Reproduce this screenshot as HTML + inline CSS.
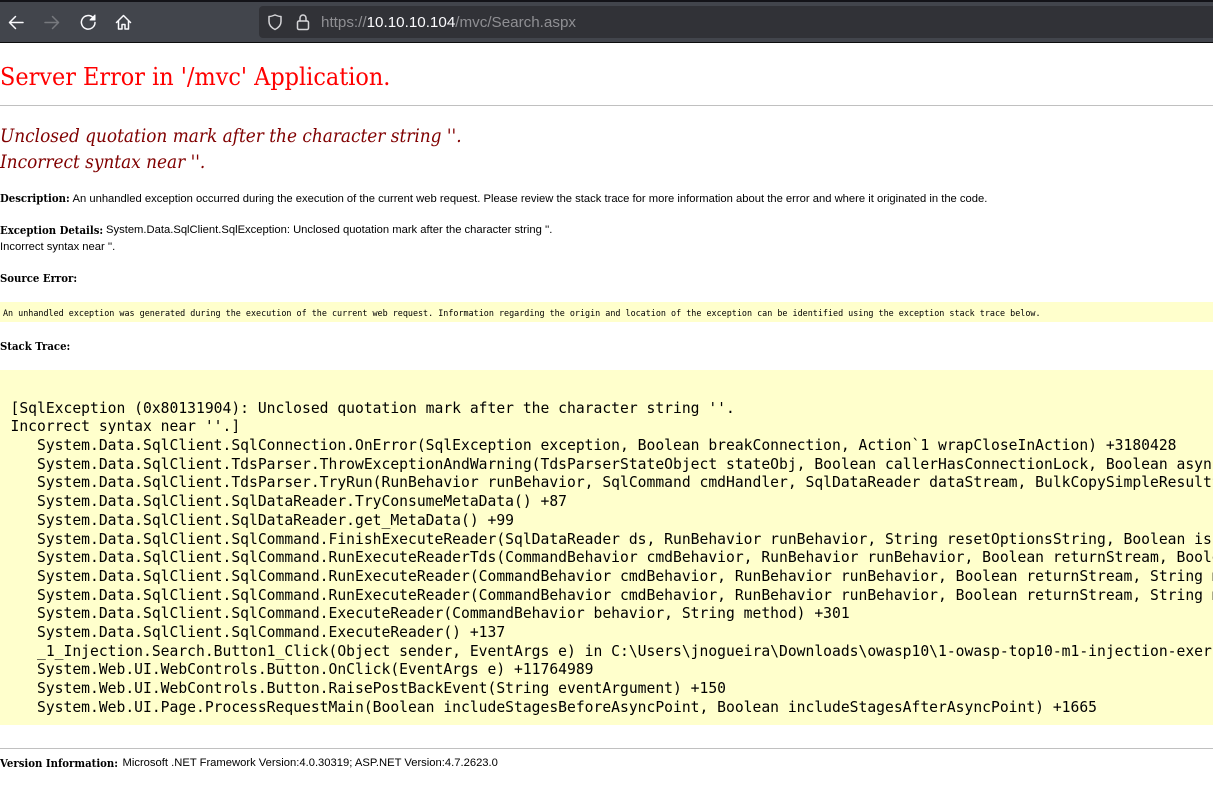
<!DOCTYPE html>
<html>
<head>
<meta charset="utf-8">
<style>
html,body{margin:0;padding:0;background:#fff;width:1213px;height:808px;overflow:hidden}
.a{position:absolute;white-space:pre;left:0}
#bar{position:absolute;left:0;top:0;width:1213px;height:43px;background:#42454c;border-top:2px solid #131318;border-bottom:1px solid #0c0c0d;box-sizing:border-box}
#url{position:absolute;left:259px;top:4px;width:954px;height:32px;background:#313237;border-radius:4px 0 0 4px}
#urltxt{position:absolute;left:321px;top:14px;font:15.2px "Liberation Sans",sans-serif;color:#8f8f93;white-space:pre}
#urltxt b{font-weight:normal;color:#fbfbfe}
h1{margin:0;font:normal 24px "DejaVu Serif",serif;color:#f00;transform:scaleX(.933);transform-origin:0 0}
.h2{font:italic 19px "DejaVu Serif",serif;color:#800000;transform:scaleX(.891);transform-origin:0 0}
.t{font:11.22px "Liberation Sans",sans-serif;color:#000}
.b{font:bold 11px "DejaVu Serif",serif;color:#000;transform:scaleX(.92);transform-origin:0 0}
.hr{position:absolute;left:0;width:1213px;height:1px;background:#c0c0c0}
.y{position:absolute;left:0;width:1213px;background:#ffffcc}
.m{font:14.685px "DejaVu Sans Mono",monospace;color:#000;left:10.5px;line-height:18px}
.sm{font:8.42px "DejaVu Sans Mono",monospace;left:3px;color:#000}
</style>
</head>
<body>
<div id="bar">
<div id="url"></div>
</div>
<svg style="position:absolute;left:0;top:0" width="320" height="43" fill="none" stroke-linecap="round" stroke-linejoin="round" stroke-width="1.5">
<path d="M23 22.500H9.500M15.500 16.500l-6 6 6 6" stroke="#fbfbfe"/>
<path d="M45 22.500h13.500M52.500 16.500l6 6-6 6" stroke="#77797e"/>
<path d="M93 17.500a6.800 6.800 0 1 0 2 5" stroke="#fbfbfe"/>
<path d="M95 15v5h-5z" fill="#fbfbfe" stroke="#fbfbfe" stroke-width="1"/>
<path d="M116.500 22.500l7-7 7 7M118.500 21v8h3.500v-4.500h3V29h3.500v-8" stroke="#fbfbfe"/>
<path d="M269 16.500c2 0 4-.7 5.800-1.500h.4c1.800.8 3.800 1.500 5.800 1.500v5c0 4-3 6.500-6 8-3-1.500-6-4-6-8z" stroke="#d5d5d8"/>
<rect x="297.500" y="21" width="11" height="8.500" rx="1.500" stroke="#d5d5d8"/>
<path d="M300 21v-3a3 3 0 0 1 6 0v3" stroke="#d5d5d8"/>
</svg>
<div id="urltxt">https://<b>10.10.10.104</b>/mvc/Search.aspx</div>

<h1 class="a" style="top:63px">Server Error in '/mvc' Application.</h1>
<div class="hr" style="top:105px"></div>
<div class="a h2" style="top:125px">Unclosed quotation mark after the character string ''.</div>
<div class="a h2" style="top:151px">Incorrect syntax near ''.</div>
<div class="a b" style="top:192px">Description:</div>
<div class="a t" style="top:193px;left:72.500px">An unhandled exception occurred during the execution of the current web request. Please review the stack trace for more information about the error and where it originated in the code.</div>
<div class="a b" style="top:224px">Exception Details:</div>
<div class="a t" style="top:224px;left:106px">System.Data.SqlClient.SqlException: Unclosed quotation mark after the character string ''.</div>
<div class="a t" style="top:241px">Incorrect syntax near ''.</div>
<div class="a b" style="top:272px">Source Error:</div>
<div class="y" style="top:302px;height:20px"></div>
<div class="a sm" style="top:308px">An unhandled exception was generated during the execution of the current web request. Information regarding the origin and location of the exception can be identified using the exception stack trace below.</div>
<div class="a b" style="top:340px">Stack Trace:</div>
<div class="y" style="top:370px;height:355px"></div>
<div style="position:absolute;left:0;top:370px;width:1213px;height:355px;overflow:hidden">
<div class="a m" style="top:30px">[SqlException (0x80131904): Unclosed quotation mark after the character string ''.</div>
<div class="a m" style="top:48px">Incorrect syntax near ''.]</div>
<div class="a m" style="top:67px">   System.Data.SqlClient.SqlConnection.OnError(SqlException exception, Boolean breakConnection, Action`1 wrapCloseInAction) +3180428</div>
<div class="a m" style="top:86px">   System.Data.SqlClient.TdsParser.ThrowExceptionAndWarning(TdsParserStateObject stateObj, Boolean callerHasConnectionLock, Boolean asyncClose) +208</div>
<div class="a m" style="top:104px">   System.Data.SqlClient.TdsParser.TryRun(RunBehavior runBehavior, SqlCommand cmdHandler, SqlDataReader dataStream, BulkCopySimpleResultSet bulkCopyHandler) +2700</div>
<div class="a m" style="top:123px">   System.Data.SqlClient.SqlDataReader.TryConsumeMetaData() +87</div>
<div class="a m" style="top:142px">   System.Data.SqlClient.SqlDataReader.get_MetaData() +99</div>
<div class="a m" style="top:161px">   System.Data.SqlClient.SqlCommand.FinishExecuteReader(SqlDataReader ds, RunBehavior runBehavior, String resetOptionsString, Boolean isInternal) +292</div>
<div class="a m" style="top:179px">   System.Data.SqlClient.SqlCommand.RunExecuteReaderTds(CommandBehavior cmdBehavior, RunBehavior runBehavior, Boolean returnStream, Boolean async) +3200</div>
<div class="a m" style="top:198px">   System.Data.SqlClient.SqlCommand.RunExecuteReader(CommandBehavior cmdBehavior, RunBehavior runBehavior, Boolean returnStream, String method) +100</div>
<div class="a m" style="top:217px">   System.Data.SqlClient.SqlCommand.RunExecuteReader(CommandBehavior cmdBehavior, RunBehavior runBehavior, Boolean returnStream, String method) +100</div>
<div class="a m" style="top:235px">   System.Data.SqlClient.SqlCommand.ExecuteReader(CommandBehavior behavior, String method) +301</div>
<div class="a m" style="top:254px">   System.Data.SqlClient.SqlCommand.ExecuteReader() +137</div>
<div class="a m" style="top:273px">   _1_Injection.Search.Button1_Click(Object sender, EventArgs e) in C:\Users\jnogueira\Downloads\owasp10\1-owasp-top10-m1-injection-exercise-files\before\1.Injection</div>
<div class="a m" style="top:291px">   System.Web.UI.WebControls.Button.OnClick(EventArgs e) +11764989</div>
<div class="a m" style="top:310px">   System.Web.UI.WebControls.Button.RaisePostBackEvent(String eventArgument) +150</div>
<div class="a m" style="top:329px">   System.Web.UI.Page.ProcessRequestMain(Boolean includeStagesBeforeAsyncPoint, Boolean includeStagesAfterAsyncPoint) +1665</div>
</div>
<div class="hr" style="top:748px"></div>
<div class="a b" style="top:757px">Version Information:</div>
<div class="a t" style="top:757px;left:122.500px">Microsoft .NET Framework Version:4.0.30319; ASP.NET Version:4.7.2623.0</div>
</body>
</html>
